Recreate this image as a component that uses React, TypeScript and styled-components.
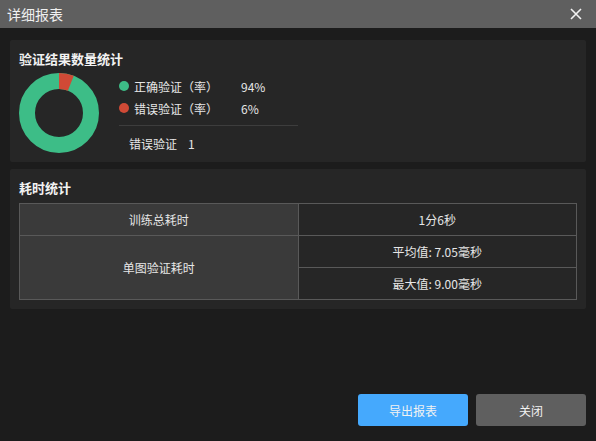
import React from "react";
import styled, { createGlobalStyle } from "styled-components";

const GlobalStyle = createGlobalStyle`
	html, body {
		margin: 0;
		padding: 0;
		background: #1c1c1c;
	}
	body {
		font-family: "Noto Sans CJK SC", "Noto Sans", sans-serif;
		color: #e6e6e6;
	}
`;

const Dialog = styled.div`
	width: 596px;
	height: 441px;
	display: flex;
	flex-direction: column;
	background: #1c1c1c;
	overflow: hidden;
`;

const TitleBar = styled.div`
	height: 28px;
	flex: none;
	display: flex;
	align-items: center;
	justify-content: space-between;
	padding: 0 13px 0 7px;
	background: #5f5f5f;
	font-size: 14px;
	color: #f0f0f0;
`;

const CloseButton = styled.button`
	width: 14px;
	height: 14px;
	padding: 0;
	border: none;
	background: none;
	display: flex;
	align-items: center;
	justify-content: center;
	cursor: pointer;
`;

const Body = styled.div`
	flex: 1;
	display: flex;
	flex-direction: column;
	padding: 12px 10px 15px 10px;
	gap: 7px;
`;

const Card = styled.section<{ $tight?: boolean }>`
	background: #262626;
	border-radius: 2px;
	padding: 9px 9px ${p => (p.$tight ? "8px" : "9px")} 9px;
`;

const CardTitle = styled.h3`
	margin: 0;
	font-size: 13px;
	font-weight: bold;
	line-height: 20px;
	color: #f2f2f2;
`;

const StatsRow = styled.div`
	display: flex;
	align-items: flex-start;
	gap: 20px;
	margin-top: 4px;
`;

const Legend = styled.div`
	width: 179px;
	display: flex;
	flex-direction: column;
	padding-top: 2px;
`;

const LegendItem = styled.div`
	display: flex;
	align-items: center;
	height: 22px;
	font-size: 12px;
`;

const Dot = styled.span<{ $color: string }>`
	width: 10px;
	height: 10px;
	border-radius: 50%;
	background: ${p => p.$color};
	margin-right: 5px;
`;

const LegendLabel = styled.span`
	width: 107px;
`;

const Divider = styled.div`
	height: 1px;
	background: #3d3d3d;
	margin: 6px 0 0 0;
`;

const ErrorCount = styled.div`
	display: flex;
	gap: 11px;
	font-size: 12px;
	line-height: 20px;
	padding: 8px 0 0 10px;
`;

const Table = styled.table`
	width: 100%;
	margin-top: 5px;
	border-collapse: collapse;
	font-size: 12px;
	table-layout: fixed;
`;

const Cell = styled.td<{ $head?: boolean }>`
	border: 1px solid #595959;
	height: 31px;
	padding: 0;
	text-align: center;
	background: ${p => (p.$head ? "#3a3a3a" : "#262626")};
	color: #e6e6e6;
`;

const Footer = styled.div`
	margin-top: auto;
	display: flex;
	justify-content: flex-end;
	gap: 8px;
`;

const ActionButton = styled.button<{ $primary?: boolean }>`
	width: 110px;
	height: 32px;
	border: none;
	border-radius: 3px;
	font-family: inherit;
	font-size: 12px;
	color: #f2f2f2;
	background: ${p => (p.$primary ? "#45a9fd" : "#5f5f5f")};
	cursor: pointer;
`;

function Donut(props: { percent: number }) {
	const r = 32;
	const c = 2 * Math.PI * r;
	const part = (props.percent / 100) * c;
	return (
		<svg width="80" height="80" viewBox="0 0 80 80">
			<circle cx="40" cy="40" r={r} fill="none" stroke="#3dbd87" strokeWidth="16" />
			<circle
				cx="40"
				cy="40"
				r={r}
				fill="none"
				stroke="#d04a36"
				strokeWidth="16"
				strokeDasharray={`${part} ${c - part}`}
				transform="rotate(-90 40 40)"
			/>
		</svg>
	);
}

export default function App() {
	return (
		<>
			<GlobalStyle />
			<Dialog>
				<TitleBar>
					<span>详细报表</span>
					<CloseButton>
						<svg width="12" height="12" viewBox="0 0 12 12">
							<path d="M1 1L11 11M11 1L1 11" stroke="#f2f2f2" strokeWidth="1.6" />
						</svg>
					</CloseButton>
				</TitleBar>
				<Body>
					<Card $tight>
						<CardTitle>验证结果数量统计</CardTitle>
						<StatsRow>
							<Donut percent={6} />
							<Legend>
								<LegendItem>
									<Dot $color="#3dbd87" />
									<LegendLabel>正确验证（率）</LegendLabel>
									<span>94%</span>
								</LegendItem>
								<LegendItem>
									<Dot $color="#d04a36" />
									<LegendLabel>错误验证（率）</LegendLabel>
									<span>6%</span>
								</LegendItem>
								<Divider />
								<ErrorCount>
									<span>错误验证</span>
									<span>1</span>
								</ErrorCount>
							</Legend>
						</StatsRow>
					</Card>
					<Card>
						<CardTitle>耗时统计</CardTitle>
						<Table>
							<tbody>
								<tr>
									<Cell $head>训练总耗时</Cell>
									<Cell>1分6秒</Cell>
								</tr>
								<tr>
									<Cell $head rowSpan={2}>单图验证耗时</Cell>
									<Cell>平均值: 7.05毫秒</Cell>
								</tr>
								<tr>
									<Cell>最大值: 9.00毫秒</Cell>
								</tr>
							</tbody>
						</Table>
					</Card>
					<Footer>
						<ActionButton $primary>导出报表</ActionButton>
						<ActionButton>关闭</ActionButton>
					</Footer>
				</Body>
			</Dialog>
		</>
	);
}
